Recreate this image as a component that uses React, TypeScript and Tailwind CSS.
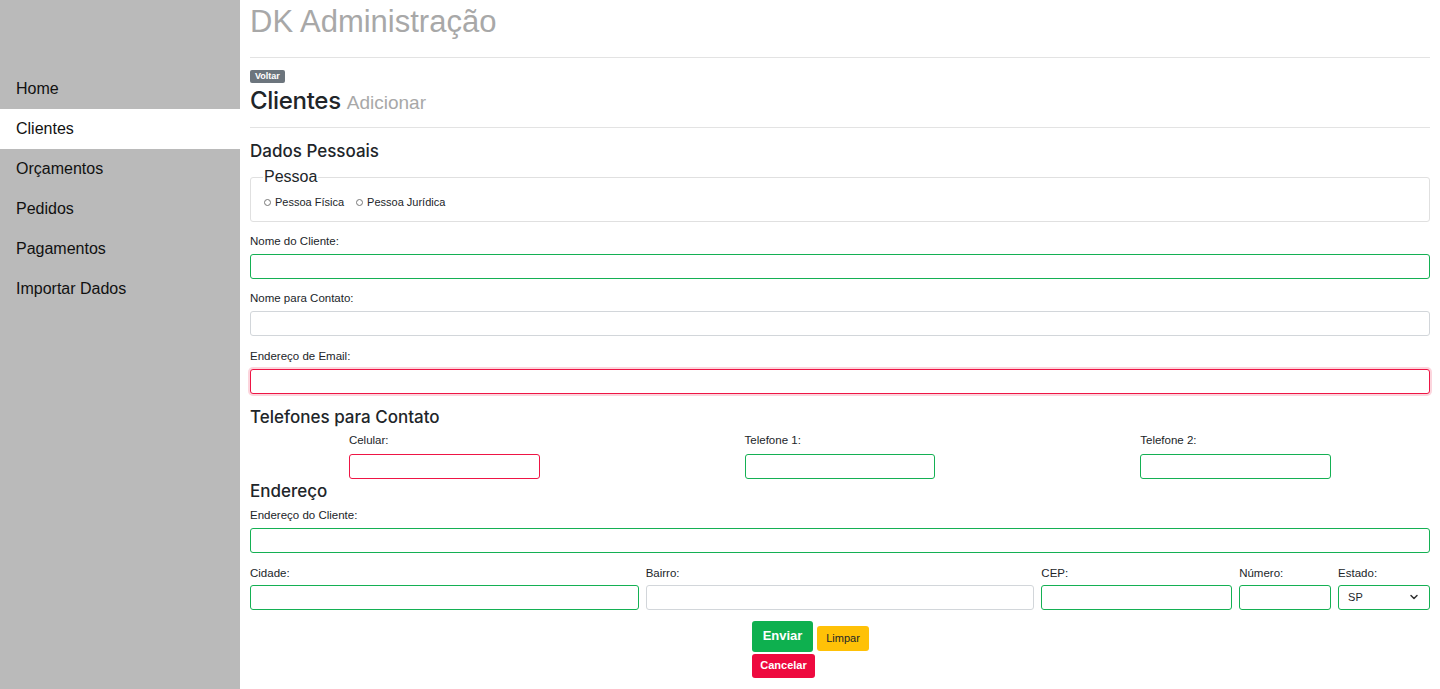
import { ChevronDown } from 'lucide-react';

const menu = ['Home', 'Clientes', 'Orçamentos', 'Pedidos', 'Pagamentos', 'Importar Dados'];

const Field = ({ label, className = '', tone = 'green', gap = 'mb-[6px]' }) => {
    const border =
        tone === 'green'
            ? 'border-[#14b053]'
            : tone === 'red'
            ? 'border-[#ee1545]'
            : tone === 'glow'
            ? 'border-[#ee1545] shadow-[0_0_0_2px_rgba(238,21,69,0.18)]'
            : 'border-[#d2d6da]';
    return (
        <div className={className}>
            <label className={`block text-[11.5px] leading-[14px] text-[#212529] ${gap}`}>{label}</label>
            <input className={`block w-full h-[25px] rounded-[3px] border bg-white outline-none ${border}`} />
        </div>
    );
};

export default function App() {
    return (
        <div className="flex min-h-[689px] font-['Liberation_Sans',Arial,sans-serif] text-[#212529]">
            {/* sidebar */}
            <aside className="w-[240px] shrink-0 bg-[#bababa] pt-[69px]">
                {menu.map((m) => (
                    <div
                        key={m}
                        className={`h-[40px] px-4 flex items-center text-[16px] text-[#111] ${m === 'Clientes' ? 'bg-white' : ''}`}
                    >
                        {m}
                    </div>
                ))}
            </aside>

            <main className="flex-1 px-[10px] pb-[10px]">
                <h1 className="text-[31px] leading-[44px] text-[#a8a8a8] h-[45px]">DK Administração</h1>
                <hr className="mt-[12px] border-[#e3e3e3]" />

                <div className="flex mt-[12px]">
                    <span className="bg-[#6c757d] text-white text-[9px] font-bold leading-[13px] px-[5px] rounded-[2px]">
                        Voltar
                    </span>
                </div>
                <div className="flex items-baseline gap-[6px] leading-[30px] mt-[3px]">
                    <span className="text-[24px] font-medium font-['Inter',sans-serif] tracking-[-0.3px]">Clientes</span>
                    <span className="text-[19px] text-[#a8a8a8]">Adicionar</span>
                </div>
                <hr className="mt-[9px] border-[#e3e3e3]" />

                <h2 className="mt-[12px] text-[17px] font-medium font-['Inter',sans-serif] leading-[22px]">Dados Pessoais</h2>

                <fieldset className="mt-[6px] border border-[#e0e0e0] rounded-[3px] px-[13px] pb-[10px]">
                    <legend className="px-[1px] text-[16px] leading-[18px] -ml-[1px]">Pessoa</legend>
                    <div className="flex items-center gap-[12px] text-[11px] mt-[8px]">
                        <label className="flex items-center gap-[4px]">
                            <span className="w-[7px] h-[7px] rounded-full border border-[#777]" />
                            Pessoa Física
                        </label>
                        <label className="flex items-center gap-[4px]">
                            <span className="w-[7px] h-[7px] rounded-full border border-[#777]" />
                            Pessoa Jurídica
                        </label>
                    </div>
                </fieldset>

                <Field label="Nome do Cliente:" className="mt-[12px]" />
                <Field label="Nome para Contato:" tone="gray" className="mt-[12px]" />
                <Field label="Endereço de Email:" tone="glow" className="mt-[13px]" />

                <h2 className="mt-[12px] text-[17px] font-medium font-['Inter',sans-serif] leading-[22px]">Telefones para Contato</h2>
                <div className="grid grid-cols-12 gap-x-[7px] mt-[5px]">
                    <Field label="Celular:" tone="red" gap="mb-[7px]" className="col-start-2 col-span-2" />
                    <Field label="Telefone 1:" gap="mb-[7px]" className="col-start-6 col-span-2" />
                    <Field label="Telefone 2:" gap="mb-[7px]" className="col-start-10 col-span-2" />
                </div>

                <h2 className="mt-[1px] text-[17px] font-medium font-['Inter',sans-serif] leading-[22px]">Endereço</h2>
                <Field label="Endereço do Cliente:" className="mt-[6px]" />

                <div className="grid grid-cols-12 gap-x-[7px] mt-[13px]">
                    <Field label="Cidade:" gap="mb-[5px]" className="col-span-4" />
                    <Field label="Bairro:" gap="mb-[5px]" tone="gray" className="col-span-4" />
                    <Field label="CEP:" gap="mb-[5px]" className="col-span-2" />
                    <Field label="Número:" gap="mb-[5px]" className="col-span-1" />
                    <div className="col-span-1">
                        <label className="block text-[11.5px] leading-[14px] mb-[5px]">Estado:</label>
                        <div className="h-[25px] rounded-[3px] border border-[#14b053] flex items-center justify-between px-[9px] text-[11px]">
                            SP
                            <ChevronDown className="w-[12px] h-[12px] text-[#333]" strokeWidth={3} />
                        </div>
                    </div>
                </div>

                <div className="ml-[502px] w-[125px] flex flex-wrap items-center gap-x-[4px] gap-y-[2px] mt-[11px]">
                    <button className="h-[31px] w-[61px] rounded-[3px] bg-[#0eb04f] text-white text-[13px] font-bold">
                        Enviar
                    </button>
                    <button className="h-[25px] w-[52px] rounded-[3px] bg-[#ffc107] text-[#212529] text-[11px] mt-[5px]">
                        Limpar
                    </button>
                    <button className="h-[24px] w-[63px] rounded-[3px] bg-[#ee0a3f] text-white text-[11px] font-bold">
                        Cancelar
                    </button>
                </div>
            </main>
        </div>
    );
}
